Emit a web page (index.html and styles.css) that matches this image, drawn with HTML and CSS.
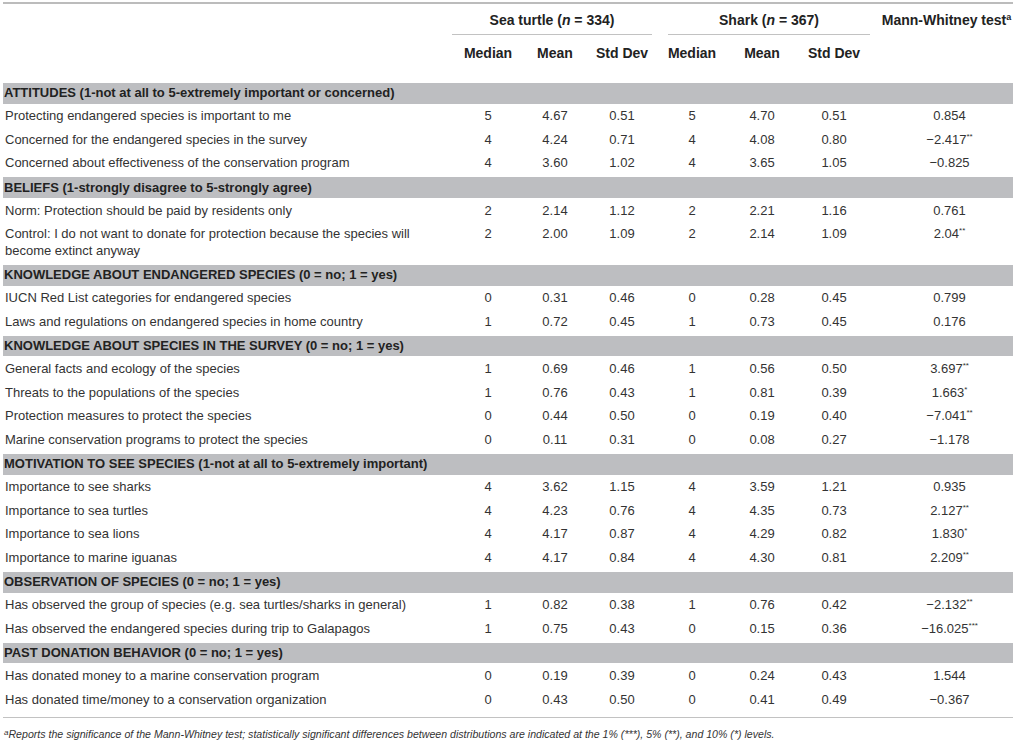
FILE: index.html
```html
<!DOCTYPE html>
<html lang="en">
<head>
<meta charset="utf-8">
<title>Sea turtle vs Shark</title>
<link rel="stylesheet" href="styles.css">
</head>
<body>
<table class="tbl">
  <colgroup>
    <col class="c-label"><col class="c-a"><col class="c-b"><col class="c-a">
    <col class="c-c"><col class="c-a"><col class="c-a"><col class="c-mw">
  </colgroup>
  <thead>
    <tr class="h1">
      <th></th>
      <th colspan="3" class="grp grp-sea"><span class="grp-line">Sea turtle (<i>n</i> = 334)</span></th>
      <th colspan="3" class="grp grp-shark"><span class="grp-line">Shark (<i>n</i> = 367)</span></th>
      <th class="mw">Mann-Whitney test<sup>a</sup></th>
    </tr>
    <tr class="h2">
      <th></th>
      <th>Median</th><th>Mean</th><th>Std Dev</th>
      <th>Median</th><th>Mean</th><th>Std Dev</th>
      <th class="mw"></th>
    </tr>
  </thead>
  <tbody>
    <tr class="sec first"><td colspan="8">ATTITUDES (1-not at all to 5-extremely important or concerned)</td></tr>
    <tr><td>Protecting endangered species is important to me</td><td>5</td><td>4.67</td><td>0.51</td><td>5</td><td>4.70</td><td>0.51</td><td class="mw">0.854</td></tr>
    <tr><td>Concerned for the endangered species in the survey</td><td>4</td><td>4.24</td><td>0.71</td><td>4</td><td>4.08</td><td>0.80</td><td class="mw">−2.417<sup>**</sup></td></tr>
    <tr><td>Concerned about effectiveness of the conservation program</td><td>4</td><td>3.60</td><td>1.02</td><td>4</td><td>3.65</td><td>1.05</td><td class="mw">−0.825</td></tr>

    <tr class="sec"><td colspan="8">BELIEFS (1-strongly disagree to 5-strongly agree)</td></tr>
    <tr><td>Norm: Protection should be paid by residents only</td><td>2</td><td>2.14</td><td>1.12</td><td>2</td><td>2.21</td><td>1.16</td><td class="mw">0.761</td></tr>
    <tr><td>Control: I do not want to donate for protection because the species will become extinct anyway</td><td>2</td><td>2.00</td><td>1.09</td><td>2</td><td>2.14</td><td>1.09</td><td class="mw">2.04<sup>**</sup></td></tr>

    <tr class="sec"><td colspan="8">KNOWLEDGE ABOUT ENDANGERED SPECIES (0 = no; 1 = yes)</td></tr>
    <tr><td>IUCN Red List categories for endangered species</td><td>0</td><td>0.31</td><td>0.46</td><td>0</td><td>0.28</td><td>0.45</td><td class="mw">0.799</td></tr>
    <tr><td>Laws and regulations on endangered species in home country</td><td>1</td><td>0.72</td><td>0.45</td><td>1</td><td>0.73</td><td>0.45</td><td class="mw">0.176</td></tr>

    <tr class="sec"><td colspan="8">KNOWLEDGE ABOUT SPECIES IN THE SURVEY (0 = no; 1 = yes)</td></tr>
    <tr><td>General facts and ecology of the species</td><td>1</td><td>0.69</td><td>0.46</td><td>1</td><td>0.56</td><td>0.50</td><td class="mw">3.697<sup>**</sup></td></tr>
    <tr><td>Threats to the populations of the species</td><td>1</td><td>0.76</td><td>0.43</td><td>1</td><td>0.81</td><td>0.39</td><td class="mw">1.663<sup>*</sup></td></tr>
    <tr><td>Protection measures to protect the species</td><td>0</td><td>0.44</td><td>0.50</td><td>0</td><td>0.19</td><td>0.40</td><td class="mw">−7.041<sup>**</sup></td></tr>
    <tr><td>Marine conservation programs to protect the species</td><td>0</td><td>0.11</td><td>0.31</td><td>0</td><td>0.08</td><td>0.27</td><td class="mw">−1.178</td></tr>

    <tr class="sec"><td colspan="8">MOTIVATION TO SEE SPECIES (1-not at all to 5-extremely important)</td></tr>
    <tr><td>Importance to see sharks</td><td>4</td><td>3.62</td><td>1.15</td><td>4</td><td>3.59</td><td>1.21</td><td class="mw">0.935</td></tr>
    <tr><td>Importance to sea turtles</td><td>4</td><td>4.23</td><td>0.76</td><td>4</td><td>4.35</td><td>0.73</td><td class="mw">2.127<sup>**</sup></td></tr>
    <tr><td>Importance to sea lions</td><td>4</td><td>4.17</td><td>0.87</td><td>4</td><td>4.29</td><td>0.82</td><td class="mw">1.830<sup>*</sup></td></tr>
    <tr><td>Importance to marine iguanas</td><td>4</td><td>4.17</td><td>0.84</td><td>4</td><td>4.30</td><td>0.81</td><td class="mw">2.209<sup>**</sup></td></tr>

    <tr class="sec"><td colspan="8">OBSERVATION OF SPECIES (0 = no; 1 = yes)</td></tr>
    <tr><td>Has observed the group of species (e.g. sea turtles/sharks in general)</td><td>1</td><td>0.82</td><td>0.38</td><td>1</td><td>0.76</td><td>0.42</td><td class="mw">−2.132<sup>**</sup></td></tr>
    <tr><td>Has observed the endangered species during trip to Galapagos</td><td>1</td><td>0.75</td><td>0.43</td><td>0</td><td>0.15</td><td>0.36</td><td class="mw">−16.025<sup>***</sup></td></tr>

    <tr class="sec"><td colspan="8">PAST DONATION BEHAVIOR (0 = no; 1 = yes)</td></tr>
    <tr><td>Has donated money to a marine conservation program</td><td>0</td><td>0.19</td><td>0.39</td><td>0</td><td>0.24</td><td>0.43</td><td class="mw">1.544</td></tr>
    <tr class="last"><td>Has donated time/money to a conservation organization</td><td>0</td><td>0.43</td><td>0.50</td><td>0</td><td>0.41</td><td>0.49</td><td class="mw">−0.367</td></tr>
  </tbody>
</table>
<p class="note"><sup>a</sup>Reports the significance of the Mann-Whitney test; statistically significant differences between distributions are indicated at the 1% (***), 5% (**), and 10% (*) levels.</p>
</body>
</html>
```
FILE: styles.css
```css
html, body {
  margin: 0;
  padding: 0;
  background: #fff;
}
body {
  padding-top: 2px;
  font-family: "Liberation Sans", Arial, sans-serif;
  color: #333;
}
.tbl {
  margin-left: 3px;
  width: 1010px;
  table-layout: fixed;
  border-collapse: collapse;
  font-size: 13px;
  border-top: 2px solid #bcbcbc;
}
.c-label { width: 449px; }
.c-a { width: 72px; }
.c-b { width: 62px; }
.c-c { width: 68px; }
.c-mw { width: 143px; }

th {
  font-weight: bold;
  font-size: 14px;
  color: #222;
  line-height: 16px;
  text-align: center;
  padding: 0;
  white-space: nowrap;
}
.h1 th {
  padding-top: 8px;
  vertical-align: top;
}
.grp-line {
  display: block;
  padding-bottom: 6px;
  border-bottom: 1px solid #c2c2c2;
}
.grp-sea .grp-line { margin-right: 6px; }
.grp-shark .grp-line { margin-left: 10px; }
.h2 th {
  padding: 10px 0 11px;
}
thead {
  border-bottom: 2px solid #bcbcbc;
}
th.mw {
  padding-left: 10px;
}
td.mw {
  padding-left: 16px;
}
th sup {
  font-size: 9px;
  line-height: 0;
  vertical-align: 5px;
}

td {
  padding: 3.58px 0;
  line-height: 16.4px;
  text-align: center;
  vertical-align: top;
  white-space: nowrap;
}
td:first-child {
  text-align: left;
  padding-left: 2px;
  white-space: normal;
}
td sup {
  font-size: 8px;
  line-height: 0;
  vertical-align: 5px;
}
.sec td {
  background: #bdbec1;
  font-weight: bold;
  color: #222;
  padding: 2.2px 1px;
  border-top: 2px solid #fff;
  border-bottom: 1px solid #fff;
}
.sec.first td {
  border-top: 11px solid #fff;
}
.last td {
  padding-bottom: 9px;
  border-bottom: 1px solid #c2c2c2;
}
.note {
  margin: 10px 0 0 4px;
  font-size: 10.6px;
  line-height: 13px;
  font-style: italic;
  color: #333;
}
.note sup {
  font-size: 8px;
  line-height: 0;
  vertical-align: 3px;
}
```
